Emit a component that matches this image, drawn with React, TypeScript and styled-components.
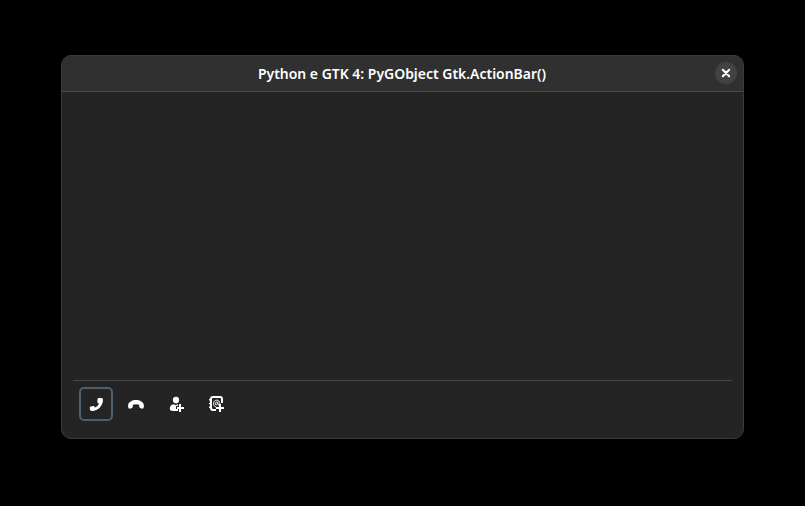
import React from "react";
import styled, { createGlobalStyle } from "styled-components";

const GlobalStyle = createGlobalStyle`
  * { box-sizing: border-box; }
  body { margin: 0; background: #000; overflow: hidden; }
`;

const Desktop = styled.main`
  height: 506px;
  padding: 55px 61px 67px;
  background: #000;
`;

const Window = styled.section`
  display: flex;
  flex-direction: column;
  width: 683px;
  height: 384px;
  overflow: hidden;
  border: 1px solid #3b3b3b;
  border-radius: 10px;
  background: #242424;
`;

const HeaderBar = styled.header`
  display: grid;
  grid-template-columns: 34px 1fr 34px;
  align-items: center;
  flex: none;
  height: 36px;
  padding-bottom: 1px;
  border-bottom: 1px solid #4a4a4a;
  background: #303030;
`;

const Title = styled.h1`
  grid-column: 2;
  margin: 0;
  text-align: center;
  white-space: nowrap;
  color: #fff;
  font: 600 15px/20px "Noto Sans", sans-serif;
  transform: translate(-0.5px, -0.5px) scaleX(0.93);
`;

const CloseButton = styled.button`
  display: grid;
  place-items: center;
  width: 22px;
  height: 22px;
  margin-left: 6px;
  padding: 0;
  border: 0;
  border-radius: 50%;
  background: #424242;
  color: #fff;
`;

const Content = styled.div`
  flex: 1;
`;

const ActionBar = styled.footer`
  display: flex;
  gap: 6px;
  flex: none;
  height: 47px;
  margin: 0 11px 11px;
  padding: 6px;
  border-top: 1px solid #464646;
`;

const ActionButton = styled.button<{ $focused?: boolean }>`
  display: grid;
  place-items: center;
  width: 34px;
  height: 34px;
  padding: 0;
  border: 2px solid ${({ $focused }) => ($focused ? "#4d6072" : "transparent")};
  border-radius: 5px;
  background: transparent;
  color: #fff;
`;

const Icon = styled.svg`
  display: block;
  width: 16px;
  height: 16px;
  fill: currentColor;
`;

const CloseIcon = () => (
  <Icon viewBox="0 0 16 16" aria-hidden>
    <path d="M4.8 4.8l6.4 6.4M11.2 4.8l-6.4 6.4" stroke="currentColor" strokeWidth="2.1" strokeLinecap="round" />
  </Icon>
);

const CallIcon = () => (
  <Icon viewBox="0 0 16 16" aria-hidden>
    <path d="M10.7 2L13.2 1.9Q14.6 1.9 14.9 3.3C15.6 9.3 9.8 15.2 3.7 15.1Q2.2 15 1.9 13.6L1.8 11.6Q1.8 10.5 2.9 10.4L5.5 10.1Q6.4 10.1 6.7 11L6.9 11.6C8.7 10.9 10.3 9.5 10.9 7.5L10 7.1Q9.2 6.8 9.3 5.8L9.6 3Q9.7 2.1 10.7 2Z" />
  </Icon>
);

const HangUpIcon = () => (
  <Icon viewBox="0 0 16 16" aria-hidden>
    <path d="M8 4C4.2 4 .4 6 .1 9.3C0 11.2.5 12.7 1.5 12.7Q2.2 12.7 3.9 12Q4.8 11.6 4.8 10.6V8.8C6.7 7.9 9.3 7.9 11.2 8.8V10.6Q11.2 11.6 12.1 12Q13.8 12.7 14.5 12.7C15.5 12.7 16 11.2 15.9 9.3C15.6 6 11.8 4 8 4Z" />
  </Icon>
);

const ContactAddIcon = () => (
  <Icon viewBox="-1 0 16 16" aria-hidden>
    <ellipse cx="7" cy="4.1" rx="3.1" ry="3.3" />
    <path d="M4.5 8.2C2 8.8 .8 10.3 .8 12.5C.8 14.3 2 15 4 15H9V13H7V10H9V8.5L8.5 8.2L7 9.2Z" />
    <path d="M10 8h2v3h3v2h-3v3h-2v-3H8v-2h2z" />
  </Icon>
);

const AddressBookAddIcon = () => (
  <Icon viewBox="0 0 16 16" aria-hidden>
    <path d="M14 7V3Q14 1 12 1H5Q3 1 3 3V12Q3 14 5 14H8" fill="none" stroke="currentColor" strokeWidth="2" />
    <path d="M1 3h3v1.5H1zM1 6.7h3v1.5H1zM1 10.5h3V12H1z" />
    <path d="M8 11C4.5 10.2 4.7 4.4 8.6 4.2C12.1 4 12.6 8.6 10.5 8.9C9.5 9 9.8 7.2 9.8 6.1M9.8 6.2C8.3 5.6 6.9 6.7 7.2 8.1C7.5 9.3 9.5 8.9 9.8 7.2" fill="none" stroke="currentColor" />
    <path d="M11 8h2v3h3v2h-3v3h-2v-3H8v-2h3z" />
  </Icon>
);

const actions = [
  { label: "Call", Glyph: CallIcon, focused: true },
  { label: "Hang up", Glyph: HangUpIcon },
  { label: "Add contact", Glyph: ContactAddIcon },
  { label: "Add to address book", Glyph: AddressBookAddIcon },
];

export default function App() {
  return (
    <>
      <GlobalStyle />
      <Desktop>
        <Window>
          <HeaderBar>
            <Title>Python e GTK 4: PyGObject Gtk.ActionBar()</Title>
            <CloseButton aria-label="Close"><CloseIcon /></CloseButton>
          </HeaderBar>
          <Content />
          <ActionBar>
            {actions.map(({ label, Glyph, focused }) => (
              <ActionButton key={label} aria-label={label} $focused={focused}>
                <Glyph />
              </ActionButton>
            ))}
          </ActionBar>
        </Window>
      </Desktop>
    </>
  );
}
